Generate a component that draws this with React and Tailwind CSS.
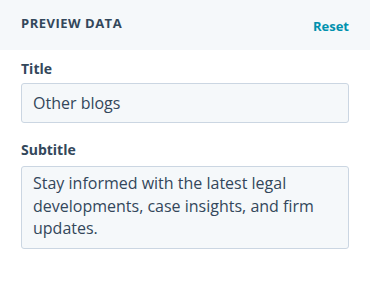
const App = () => {
  return (
    <div
      className="w-[370px] bg-white text-[#33475b]"
      style={{ fontFamily: '"Open Sans", "Noto Sans", sans-serif' }}
    >
      <div className="flex h-[50px] items-start justify-between bg-[#f5f8fa] px-[21px]">
        <h2 className="pt-[15px] text-[13px] font-bold uppercase leading-[16px] tracking-[0.5px]">
          Preview data
        </h2>
        <button className="pt-[18px] text-[13px] font-bold leading-[16px] text-[#0091ae]">
          Reset
        </button>
      </div>
      <div className="px-[21px] pt-[9px]">
        <label className="block text-[14px] font-bold leading-[20px]">Title</label>
        <div className="mt-[4px] h-[40px] rounded-[3px] border border-[#cbd6e2] bg-[#f5f8fa] px-[11px] text-[16px] leading-[38px]">
          Other blogs
        </div>
        <label className="mt-[17px] block text-[14px] font-bold leading-[20px]">
          Subtitle
        </label>
        <div className="mt-[6px] h-[83px] rounded-[3px] border border-[#cbd6e2] bg-[#f5f8fa] px-[11px] py-[5px] text-[16px] leading-[22.5px]">
          Stay informed with the latest legal developments, case insights, and
          firm updates.
        </div>
      </div>
    </div>
  );
};
export default App;
